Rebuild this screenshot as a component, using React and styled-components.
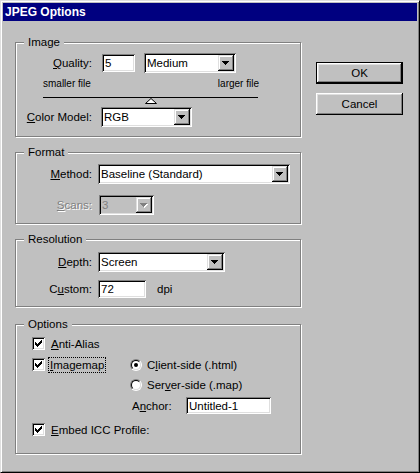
import React from 'react';
import styled, { createGlobalStyle } from 'styled-components';

const GlobalStyle = createGlobalStyle`
  html, body {
    margin: 0;
    padding: 0;
    background: #c0c0c0;
  }
  body {
    font-family: "Liberation Sans", Arial, sans-serif;
    font-size: 11.5px;
    color: #000;
  }
`;

const sunken = `
  box-shadow: inset 1px 1px #808080, inset -1px -1px #fff, inset 2px 2px #000, inset -2px -2px #dfdfdf;
`;

const raised = `
  box-shadow: inset -1px -1px #000, inset 1px 1px #fff, inset -2px -2px #808080, inset 2px 2px #dfdfdf;
`;

const Window = styled.div`
  width: 420px;
  height: 473px;
  box-sizing: border-box;
  background: #c0c0c0;
  border: 1px solid;
  border-color: #dfdfdf #000 #000 #dfdfdf;
  box-shadow: inset 1px 1px #fff, inset -1px -1px #808080;
  padding: 2px;
  display: flex;
  flex-direction: column;
`;

const TitleBar = styled.div`
  height: 18px;
  line-height: 18px;
  background: #000080;
  color: #fff;
  font-weight: bold;
  font-size: 12px;
  padding-left: 2px;
  flex: none;
`;

const Body = styled.div`
  display: flex;
  padding: 21px 0 0 12px;
`;

const LeftCol = styled.div`
  width: 286px;
  display: flex;
  flex-direction: column;
`;

const ButtonCol = styled.div`
  margin-left: 15px;
  padding-top: 20px;
  display: flex;
  flex-direction: column;
  gap: 9px;
`;

const Button = styled.div`
  box-sizing: border-box;
  width: 87px;
  height: 22px;
  display: flex;
  align-items: center;
  justify-content: center;
  background: #c0c0c0;
  ${raised}
  ${p => p.$default && `
    border: 1px solid #000;
  `}
`;

const Group = styled.div`
  position: relative;
  border: 1px solid #808080;
  box-shadow: 1px 1px 0 #fff, inset 1px 1px 0 #fff;
  margin-top: ${p => p.$mt || 0}px;
  padding: ${p => p.$pad};
`;

const Legend = styled.span`
  position: absolute;
  top: -8px;
  left: 8px;
  padding: 0 4px;
  line-height: 14px;
  background: #c0c0c0;
`;

const Row = styled.div`
  display: flex;
  align-items: center;
  height: ${p => p.$h || 20}px;
  margin-top: ${p => p.$mt || 0}px;
`;

const Label = styled.span`
  width: 76px;
  text-align: right;
  margin-right: ${p => p.$gap || 6}px;
  flex: none;
  color: ${p => (p.$disabled ? '#808080' : '#000')};
  text-shadow: ${p => (p.$disabled ? '1px 1px #fff' : 'none')};
`;

const Field = styled.div`
  box-sizing: border-box;
  width: ${p => p.$w}px;
  height: ${p => p.$h || 20}px;
  margin-left: ${p => p.$ml || 0}px;
  padding: 2px;
  display: flex;
  align-items: center;
  flex: none;
  background: ${p => (p.$disabled ? '#c0c0c0' : '#fff')};
  color: ${p => (p.$disabled ? '#808080' : '#000')};
  ${sunken}
`;

const FieldText = styled.span`
  flex: 1;
  padding-left: 1px;
  white-space: nowrap;
  overflow: hidden;
`;

const DropButton = styled.span`
  width: 16px;
  align-self: stretch;
  flex: none;
  box-sizing: border-box;
  background: #c0c0c0;
  display: flex;
  align-items: center;
  justify-content: center;
  box-shadow: inset -1px -1px #000, inset 1px 1px #dfdfdf, inset -2px -2px #808080, inset 2px 2px #fff;
`;

const Scale = styled.div`
  margin: 4px 0 0 27px;
  width: 216px;
  height: 14px;
  line-height: 14px;
  display: flex;
  justify-content: space-between;
  font-size: 10px;
`;

const Track = styled.div`
  position: relative;
  margin: 6px 0 0 27px;
  width: 215px;
  height: 6px;
  border-top: 1px solid #000;
`;

const Thumb = styled.svg`
  position: absolute;
  top: 0;
  transform: translateX(-50%);
  display: block;
`;

const Plain = styled.span`
  margin-left: ${p => p.$ml || 0}px;
`;

const OptRow = styled.div`
  display: flex;
  align-items: center;
  height: ${p => p.$h || 13}px;
  margin-top: ${p => p.$mt || 0}px;
  padding-left: ${p => p.$indent || 0}px;
`;

const Item = styled.div`
  display: flex;
  align-items: center;
  width: ${p => (p.$w ? `${p.$w}px` : 'auto')};
  flex: none;
`;

const CheckBox = styled.span`
  box-sizing: border-box;
  width: 13px;
  height: 13px;
  flex: none;
  background: #fff;
  display: flex;
  align-items: center;
  justify-content: center;
  margin-right: 5px;
  ${sunken}
`;

const ItemText = styled.span`
  padding: 0 1px;
  line-height: 14px;
  outline: ${p => (p.$focus ? '1px dotted #000' : 'none')};
  margin-left: ${p => (p.$focus ? -1 : 0)}px;
`;

const RadioOuter = styled.span`
  box-sizing: border-box;
  width: 12px;
  height: 12px;
  flex: none;
  border-radius: 50%;
  border: 1px solid;
  border-color: #808080 #fff #fff #808080;
  display: flex;
  margin-right: 4px;
`;

const RadioInner = styled.span`
  box-sizing: border-box;
  flex: 1;
  border-radius: 50%;
  border: 1px solid;
  border-color: #000 #dfdfdf #dfdfdf #000;
  background: #fff;
  display: flex;
  align-items: center;
  justify-content: center;
`;

const Dot = styled.span`
  width: 4px;
  height: 4px;
  border-radius: 50%;
  background: #000;
`;

const AnchorLabel = styled.span`
  width: 54px;
  flex: none;
`;

const Arrow = ({ disabled }) => (
  <svg width="8" height="5" viewBox="0 0 8 5" shapeRendering="crispEdges">
    {disabled && (
      <path d="M1 1h7v1h-7zM2 2h5v1h-5zM3 3h3v1h-3zM4 4h1v1h-1z" fill="#fff" />
    )}
    <path
      d="M0 0h7v1h-7zM1 1h5v1h-5zM2 2h3v1h-3zM3 3h1v1h-1z"
      fill={disabled ? '#808080' : '#000'}
    />
  </svg>
);

const Check = () => (
  <svg width="7" height="7" viewBox="0 0 7 7" shapeRendering="crispEdges">
    <path
      d="M0 2h1v3h-1zM1 3h1v3h-1zM2 4h1v3h-1zM3 3h1v3h-1zM4 2h1v3h-1zM5 1h1v3h-1zM6 0h1v3h-1z"
      fill="#000"
    />
  </svg>
);

const Select = ({ w, h, ml, value, disabled }) => (
  <Field $w={w} $h={h} $ml={ml} $disabled={disabled}>
    <FieldText>{value}</FieldText>
    <DropButton>
      <Arrow disabled={disabled} />
    </DropButton>
  </Field>
);

const TextBox = ({ w, h, ml, value }) => (
  <Field $w={w} $h={h || 18} $ml={ml}>
    <FieldText>{value}</FieldText>
  </Field>
);

const CheckItem = ({ children, w, focus }) => (
  <Item $w={w}>
    <CheckBox>
      <Check />
    </CheckBox>
    <ItemText $focus={focus}>{children}</ItemText>
  </Item>
);

const RadioItem = ({ children, checked }) => (
  <Item>
    <RadioOuter>
      <RadioInner>{checked && <Dot />}</RadioInner>
    </RadioOuter>
    <ItemText>{children}</ItemText>
  </Item>
);

const quality = 5;

export default function App() {
  return (
    <>
      <GlobalStyle />
      <Window>
        <TitleBar>JPEG Options</TitleBar>
        <Body>
          <LeftCol>
            <Group $pad="10px 0 9px 0">
              <Legend>Image</Legend>
              <Row>
                <Label $gap={10}>
                  <u>Q</u>uality:
                </Label>
                <TextBox w={33} value={quality} />
                <Select w={92} ml={9} value="Medium" />
              </Row>
              <Scale>
                <span>smaller file</span>
                <span>larger file</span>
              </Scale>
              <Track>
                <Thumb
                  width="12"
                  height="6"
                  viewBox="0 0 12 6"
                  style={{ left: `${(quality / 10) * 100}%` }}
                >
                  <polygon points="6,0.5 11.5,5.5 0.5,5.5" fill="#fff" stroke="#000" strokeWidth="1" />
                </Thumb>
              </Track>
              <Row $mt={3}>
                <Label $gap={9}>
                  <u>C</u>olor Model:
                </Label>
                <Select w={91} value="RGB" />
              </Row>
            </Group>

            <Group $mt={15} $pad="11px 0 8px 0">
              <Legend>Format</Legend>
              <Row>
                <Label>
                  <u>M</u>ethod:
                </Label>
                <Select w={192} value="Baseline (Standard)" />
              </Row>
              <Row $mt={11}>
                <Label $disabled $gap={7}>
                  <u>S</u>cans:
                </Label>
                <Select w={55} value="3" disabled />
              </Row>
            </Group>

            <Group $mt={15} $pad="12px 0 8px 0">
              <Legend>Resolution</Legend>
              <Row>
                <Label>
                  <u>D</u>epth:
                </Label>
                <Select w={127} value="Screen" />
              </Row>
              <Row $mt={8} $h={18}>
                <Label>
                  C<u>u</u>stom:
                </Label>
                <TextBox w={48} value="72" />
                <Plain $ml={11}>dpi</Plain>
              </Row>
            </Group>

            <Group $mt={17} $pad="12px 0 17px 16px">
              <Legend>Options</Legend>
              <OptRow>
                <CheckItem>
                  <u>A</u>nti-Alias
                </CheckItem>
              </OptRow>
              <OptRow $mt={8}>
                <CheckItem w={98} focus>
                  <u>I</u>magemap
                </CheckItem>
                <RadioItem checked>
                  C<u>l</u>ient-side (.html)
                </RadioItem>
              </OptRow>
              <OptRow $mt={7} $indent={98}>
                <RadioItem>
                  Ser<u>v</u>er-side (.map)
                </RadioItem>
              </OptRow>
              <OptRow $mt={6} $h={17} $indent={100}>
                <AnchorLabel>
                  A<u>n</u>chor:
                </AnchorLabel>
                <TextBox w={85} h={17} value="Untitled-1" />
              </OptRow>
              <OptRow $mt={9}>
                <CheckItem>
                  <u>E</u>mbed ICC Profile:
                </CheckItem>
              </OptRow>
            </Group>
          </LeftCol>

          <ButtonCol>
            <Button $default>OK</Button>
            <Button>Cancel</Button>
          </ButtonCol>
        </Body>
      </Window>
    </>
  );
}
